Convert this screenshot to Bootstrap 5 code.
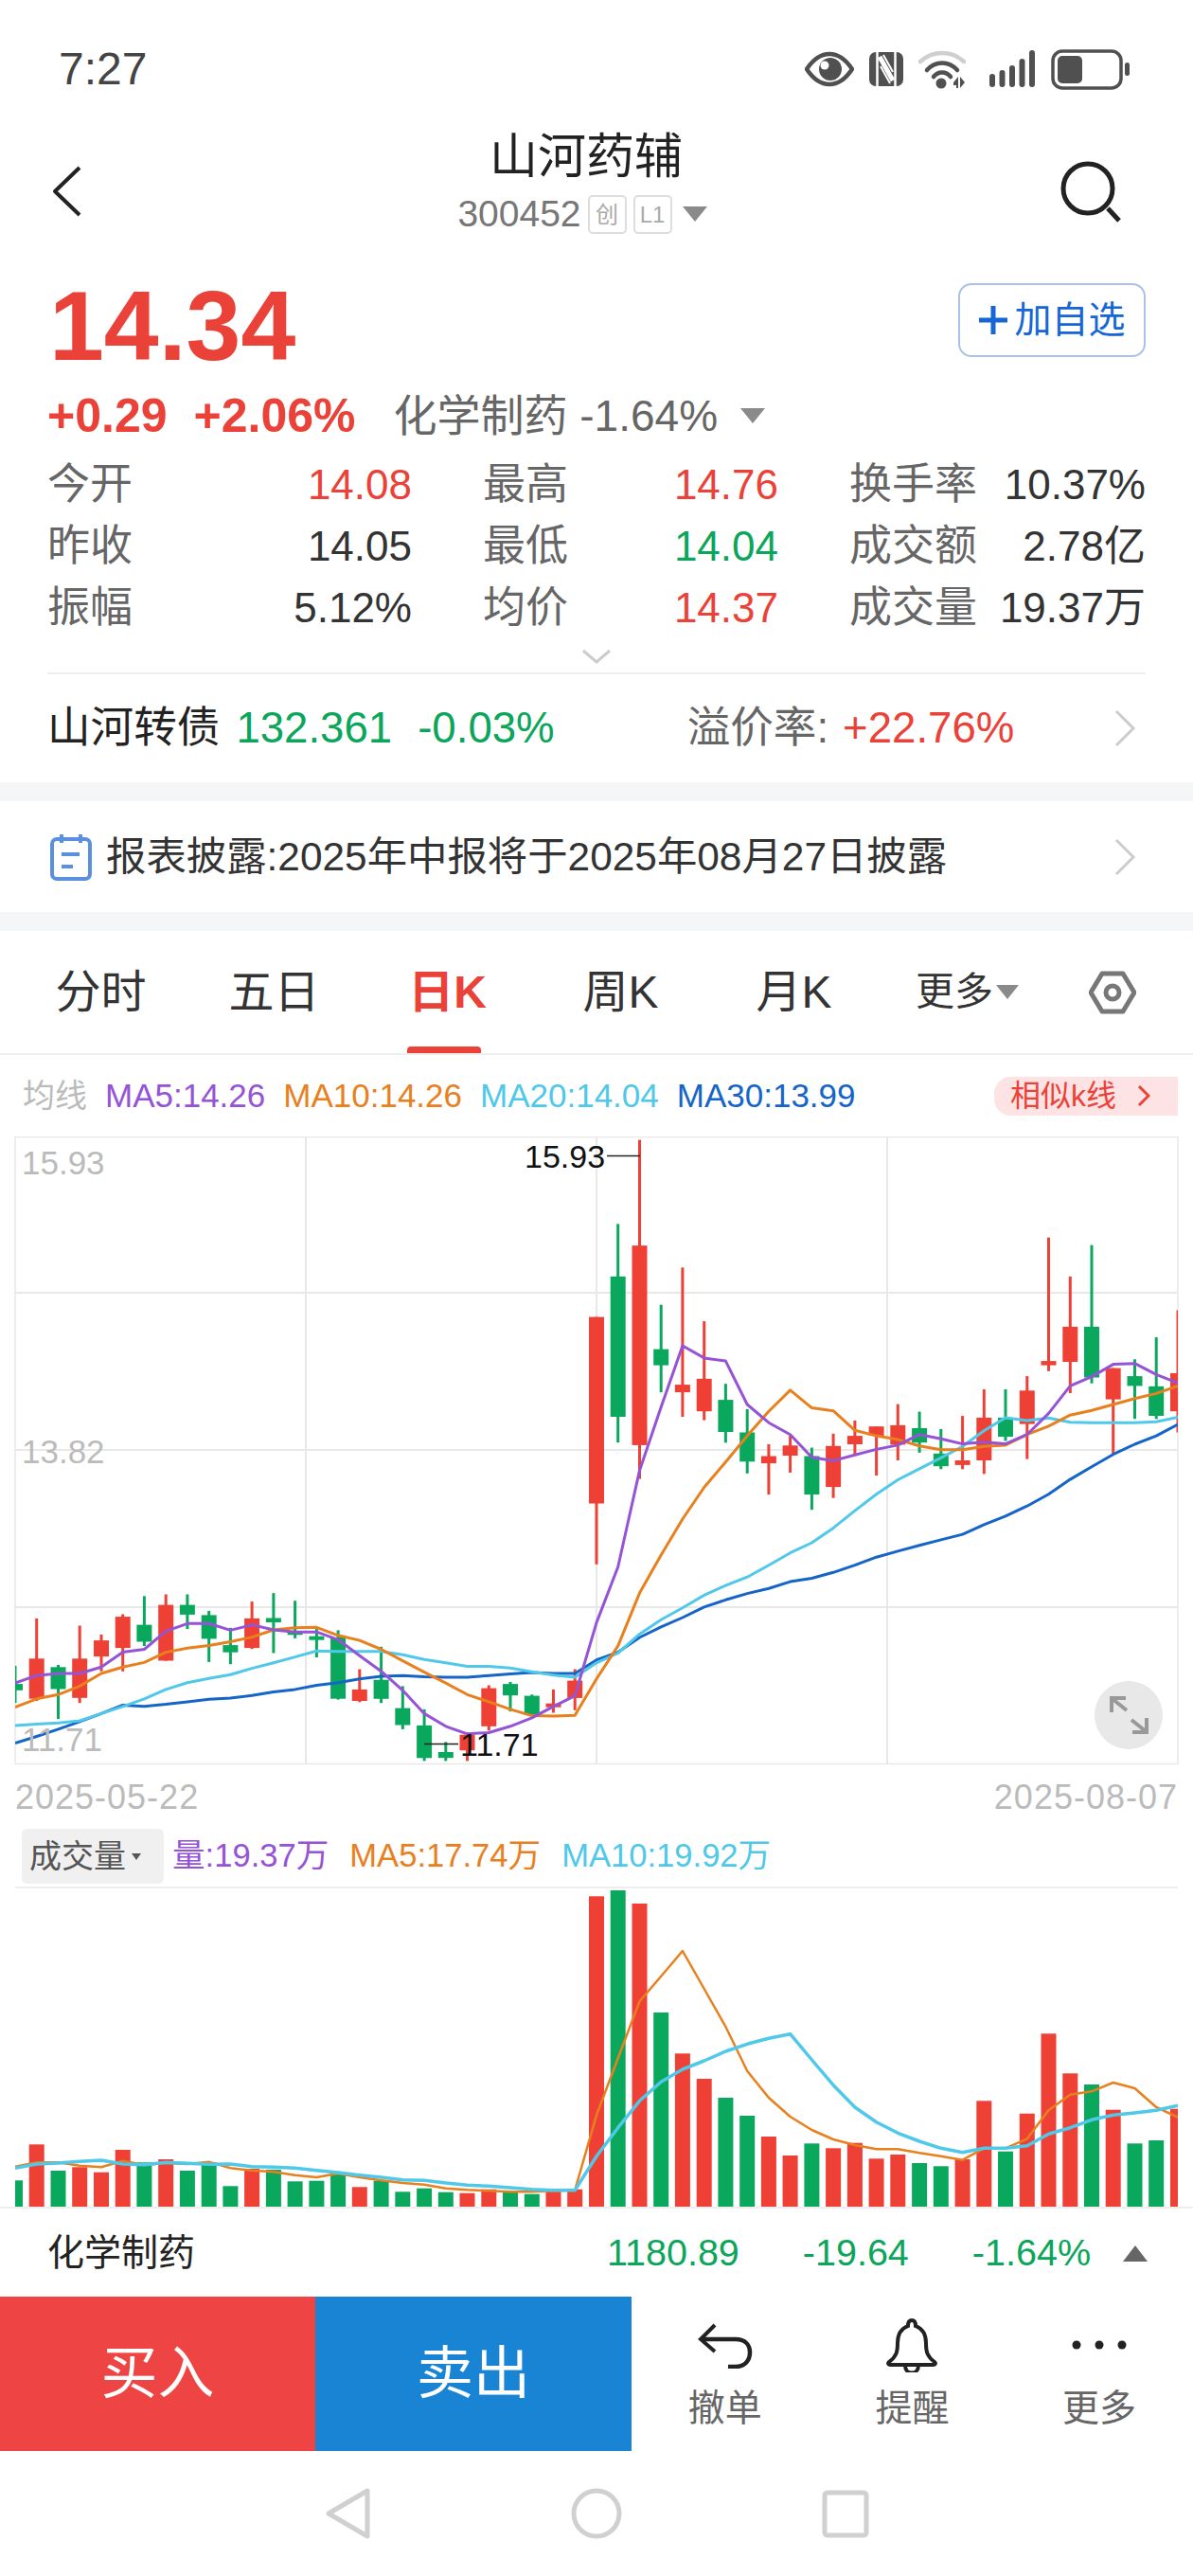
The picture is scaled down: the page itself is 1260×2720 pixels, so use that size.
<!DOCTYPE html>
<html lang="zh-CN">

<head>
    <meta charset="UTF-8">
    <title>山河药辅</title>
    <link href="https://cdn.jsdelivr.net/npm/bootstrap@5.3.0/dist/css/bootstrap.min.css" rel="stylesheet">
    <style>
        body { width: 1260px; background: #fff; font-family: "Liberation Sans", "Noto Sans CJK SC", sans-serif; color: #333; overflow-x: hidden; }
        svg { display: block; flex: none; }
        .c-red { color: #ea4238; }
        .c-green { color: #0ba55c; }
        .c-gray { color: #666; }
        .status-bar { height: 112px; padding: 34px 66px 0 62px; }
        .status-time { font-size: 48px; line-height: 78px; color: #444; }
        .status-icons { gap: 16px; height: 78px; }
        .stock-head { height: 150px; }
        .head-left { width: 190px; padding: 63px 0 0 55px; }
        .head-right { width: 212px; padding: 58px 0 0 72px; }
        .stock-name { font-size: 51px; line-height: 52px; color: #222; margin-top: 28px; }
        .stock-code { font-size: 39px; line-height: 52px; color: #777; margin-top: 8px; margin-right: 8px; gap: 7px; }
        .tag-box { width: 41px; height: 41px; border: 2px solid #ddd; border-radius: 5px; font-size: 24px; line-height: 37px; color: #aaa; text-align: center; }
        .tri-down { display: inline-block; width: 0; height: 0; border-left: 13px solid transparent; border-right: 13px solid transparent; border-top: 16px solid #8a8a8a; }
        .tri-up { display: inline-block; width: 0; height: 0; border-left: 13px solid transparent; border-right: 13px solid transparent; border-bottom: 17px solid #666; }
        .price-row { height: 78px; margin-top: 37px; padding: 0 50px; }
        .price-now { font-size: 104px; line-height: 78px; font-weight: 700; padding: 6px 0 0 2px; }
        .add-btn { width: 198px; height: 78px; border: 2px solid #a9c3e6; border-radius: 14px; color: #1766d6; font-size: 39px; gap: 6px; }
        .change-row { height: 48px; margin-top: 38px; padding: 0 50px; font-size: 46px; line-height: 48px; }
        .change-val { font-size: 50px; font-weight: 700; margin-right: 28px; }
        .change-sector { margin-left: 12px; }
        .stat-wrap { margin-top: 16px; padding: 0 50px; font-size: 44px; }
        .stat-row { height: 65px; line-height: 65px; }
        .stat-row .c-gray { font-size: 45px; }
        .stat-cell { width: 385px; }
        .stat-cell + .stat-cell { width: 312px; margin-left: 75px; }
        .stat-cell:last-child { width: 313px; }
        .more-row { height: 36px; padding-top: 11px; }
        .line-box { margin: 0 50px; height: 2px; background: #eee; }
        .bond-row { height: 114px; padding: 0 60px 0 50px; font-size: 45.6px; }
        .gray-band { height: 20px; background: #f5f6f8; }
        .notice-row { height: 117px; padding: 0 60px 0 53px; font-size: 42.4px; color: #333; gap: 15px; }
        .tabs-row { height: 131px; border-bottom: 2px solid #eee; padding-left: 15px; }
        .tab-item { position: relative; width: 183px; height: 129px; font-size: 48px; color: #333; }
        .tab-on { color: #ea4238; font-weight: 700; }
        .tab-on::after { content: ""; position: absolute; left: 49px; bottom: 0; width: 78px; height: 7px; background: #ea4238; border-radius: 4px 4px 0 0; }
        .tab-more { font-size: 41px; gap: 3px; }
        .tab-more .tri-down { border-left-width: 12px; border-right-width: 12px; border-top-width: 15px; }
        .ma-row { height: 86px; padding-left: 24px; font-size: 35px; gap: 19px; }
        .ma-label { color: #bbb; font-size: 34px; }
        .ma-purple { color: #9553d6; }
        .ma-orange { color: #e8801e; }
        .ma-cyan { color: #4fc8ea; }
        .ma-blue { color: #1565c8; }
        .sim-tag { margin-left: auto; margin-right: 16px; width: 194px; height: 41px; background: #fde3e3; border-radius: 18px 0 0 18px; color: #ea4238; font-size: 32px; gap: 22px; padding-left: 17px; }
        .date-row { height: 67px; padding: 0 16px; font-size: 36px; letter-spacing: 1px; color: #bbb; }
        .vol-head { height: 58px; padding-left: 23px; font-size: 34.6px; gap: 9px; }
        .vol-btn { width: 150px; height: 58px; background: #f0f0f0; border-radius: 6px; color: #555; padding-left: 8px; gap: 6px; font-size: 34px; }
        .vol-btn i { border-left: 5px solid transparent; border-right: 5px solid transparent; border-top: 7px solid #555; }
        .vol-item { margin-left: 13px; }
        .index-row { height: 92px; padding: 0 48px 0 50px; font-size: 39px; color: #222; }
        .index-nums { gap: 67px; font-size: 39.5px; }
        .index-nums .tri-up { margin-left: -33px; }
        .action-bar { height: 163px; }
        .trade-btn { width: 333px; height: 163px; font-size: 60px; color: #fff; }
        .trade-buy { background: #ef4444; }
        .trade-sell { width: 334px; background: #1a84d4; }
        .action-item { width: 197.6px; color: #666; font-size: 39px; line-height: 44px; padding-top: 28px; }
        .action-item svg { margin-bottom: 20px; }
        .action-bell { padding-top: 23px; }
        .action-bell svg { margin-bottom: 16px; }
        .nav-bar { height: 132px; }
    </style>
</head>

<body class="m-0">
    <!-- status bar -->
    <div class="status-bar d-flex justify-content-between align-items-start">
        <div class="status-time">7:27</div>
        <div class="status-icons d-flex align-items-center">
            <svg width="52" height="38" viewBox="0 0 52 38"><path d="M2 19C10 7 18 3 26 3s16 4 24 16c-8 12-16 16-24 16S10 31 2 19Z" fill="none" stroke="#505050" stroke-width="4.5" stroke-linejoin="round"/><circle cx="27" cy="19" r="12" fill="#505050"/><circle cx="21" cy="15" r="4.5" fill="#fff"/></svg>
            <svg width="36" height="38" viewBox="0 0 36 38"><rect x="0" y="1" width="36" height="36" rx="7" fill="#505050"/><path d="M8.500 1v36M27.500 1v36" stroke="#fff" stroke-width="2.500"/><path d="M11 6l14 25" stroke="#fff" stroke-width="5"/><path d="M12 16l10 18M15 4l10 18" stroke="#fff" stroke-width="2"/></svg>
            <svg width="50" height="42" viewBox="0 0 50 42"><path d="M2 13C15 1 35 1 48 13" fill="none" stroke="#cfcfcf" stroke-width="4.500" stroke-linecap="round"/><path d="M9 22C18 12 32 12 41 22" fill="none" stroke="#505050" stroke-width="4.500" stroke-linecap="round"/><path d="M16 29C21 23 29 23 34 29" fill="none" stroke="#505050" stroke-width="4.500" stroke-linecap="round"/><circle cx="24" cy="36" r="5.500" fill="#505050"/><path d="M37 35l5-6v12h-2v-3h-3ZM44 29v12l5-6Z" fill="#505050"/></svg>
            <svg class="ms-2" width="50" height="42" viewBox="0 0 50 42"><g stroke="#505050" stroke-width="6" stroke-linecap="round"><path d="M4 29v8M14.500 25v12M25 20v17M35.500 13v24M46 4v33"/></g></svg>
            <svg width="84" height="44" viewBox="0 0 84 44"><rect x="2" y="3" width="72" height="39" rx="10" fill="none" stroke="#505050" stroke-width="3.500"/><rect x="7" y="8" width="26" height="29" rx="5" fill="#505050"/><rect x="78" y="15" width="5" height="14" rx="2.500" fill="#505050"/></svg>
        </div>
    </div>

    <!-- stock title -->
    <div class="stock-head d-flex">
        <div class="head-left">
            <svg width="32" height="54" viewBox="0 0 32 54"><path d="M29 2 3 27l26 25" fill="none" stroke="#222" stroke-width="4" stroke-linejoin="round"/></svg>
        </div>
        <div class="flex-grow-1 d-flex flex-column align-items-center">
            <div class="stock-name">山河药辅</div>
            <div class="stock-code d-flex align-items-center">
                <span>300452</span>
                <span class="tag-box">创</span>
                <span class="tag-box">L1</span>
                <span class="tri-down ms-1"></span>
            </div>
        </div>
        <div class="head-right">
            <svg width="66" height="66" viewBox="0 0 66 66"><circle cx="29" cy="29" r="26" fill="none" stroke="#222" stroke-width="5"/><path d="M50 50l12 13" stroke="#222" stroke-width="5"/></svg>
        </div>
    </div>

    <!-- price -->
    <div class="price-row d-flex justify-content-between">
        <div class="price-now c-red">14.34</div>
        <div class="add-btn d-flex align-items-center justify-content-center">
            <svg width="32" height="32" viewBox="0 0 32 32"><path d="M16 1v30M1 16h30" stroke="#1766d6" stroke-width="5"/></svg>
            <span>加自选</span>
        </div>
    </div>
    <div class="change-row d-flex align-items-center">
        <span class="change-val c-red">+0.29</span>
        <span class="change-val c-red">+2.06%</span>
        <span class="c-gray change-sector">化学制药 -1.64%</span>
        <span class="tri-down ms-4"></span>
    </div>

    <div class="stat-wrap" id="statWrap"></div>

    <div class="more-row d-flex justify-content-center">
        <svg width="32" height="16" viewBox="0 0 32 16"><path d="M2 2l14 12L30 2" fill="none" stroke="#ccc" stroke-width="3"/></svg>
    </div>
    <div class="line-box"></div>

    <!-- convertible bond -->
    <div class="bond-row d-flex align-items-center">
        <span style="color:#222">山河转债</span>
        <span class="c-green" style="margin-left:17px">132.361</span>
        <span class="c-green" style="margin-left:27px">-0.03%</span>
        <span class="c-gray" style="margin-left:140px">溢价率:</span>
        <span class="c-red" style="margin-left:15px">+22.76%</span>
        <svg class="ms-auto" width="24" height="40" viewBox="0 0 24 40"><path d="M3 2l18 18L3 38" fill="none" stroke="#ccc" stroke-width="3"/></svg>
    </div>
    <div class="gray-band"></div>

    <!-- report notice -->
    <div class="notice-row d-flex align-items-center">
        <svg width="44" height="50" viewBox="0 0 44 50"><rect x="2" y="6" width="40" height="42" rx="5" fill="none" stroke="#5b8fe0" stroke-width="4"/><path d="M12 1v9M32 1v9M12 22h19M12 35h12" stroke="#5b8fe0" stroke-width="4"/></svg>
        <span>报表披露:2025年中报将于2025年08月27日披露</span>
        <svg class="ms-auto" width="24" height="40" viewBox="0 0 24 40"><path d="M3 2l18 18L3 38" fill="none" stroke="#ccc" stroke-width="3"/></svg>
    </div>
    <div class="gray-band"></div>

    <!-- period tabs -->
    <div class="tabs-row d-flex">
        <div class="tab-item d-flex align-items-center justify-content-center">分时</div>
        <div class="tab-item d-flex align-items-center justify-content-center">五日</div>
        <div class="tab-item tab-on d-flex align-items-center justify-content-center">日K</div>
        <div class="tab-item d-flex align-items-center justify-content-center">周K</div>
        <div class="tab-item d-flex align-items-center justify-content-center">月K</div>
        <div class="tab-item tab-more d-flex align-items-center justify-content-center"><span>更多</span><span class="tri-down"></span></div>
        <div class="d-flex align-items-center" style="margin-left:37px">
            <svg width="50" height="46" viewBox="0 0 50 46"><path d="M14 3h22l12 20-12 20H14L2 23Z" fill="none" stroke="#777" stroke-width="5" stroke-linejoin="round"/><circle cx="25" cy="23" r="7" fill="none" stroke="#777" stroke-width="5"/></svg>
        </div>
    </div>

    <!-- MA legend -->
    <div class="ma-row d-flex align-items-center">
        <span class="ma-label">均线</span>
        <span class="ma-purple">MA5:14.26</span>
        <span class="ma-orange">MA10:14.26</span>
        <span class="ma-cyan">MA20:14.04</span>
        <span class="ma-blue">MA30:13.99</span>
        <span class="sim-tag d-flex align-items-center">相似k线
            <svg width="14" height="24" viewBox="0 0 14 24"><path d="M2 2l10 10L2 22" fill="none" stroke="#ea4238" stroke-width="3"/></svg>
        </span>
    </div>

    <svg id="klineChart" width="1260" height="664" viewBox="0 0 1260 664"></svg>

    <div class="date-row d-flex justify-content-between align-items-center">
        <span>2025-05-22</span>
        <span>2025-08-07</span>
    </div>

    <!-- volume -->
    <div class="vol-head d-flex align-items-center">
        <div class="vol-btn d-flex align-items-center"><span>成交量</span><i></i></div>
        <span class="ma-purple">量:19.37万</span>
        <span class="ma-orange vol-item">MA5:17.74万</span>
        <span class="ma-cyan vol-item">MA10:19.92万</span>
    </div>
    <svg id="volChart" width="1260" height="344" viewBox="0 0 1260 344"></svg>

    <!-- sector index -->
    <div class="index-row d-flex justify-content-between align-items-center">
        <span>化学制药</span>
        <div class="index-nums d-flex align-items-center c-green">
            <span>1180.89</span>
            <span>-19.64</span>
            <span>-1.64%</span>
            <span class="tri-up"></span>
        </div>
    </div>

    <!-- actions -->
    <div class="action-bar d-flex">
        <div class="trade-btn trade-buy d-flex align-items-center justify-content-center">买入</div>
        <div class="trade-btn trade-sell d-flex align-items-center justify-content-center">卖出</div>
        <div class="action-item d-flex flex-column align-items-center">
            <svg width="58" height="48" viewBox="0 0 58 48"><path d="M18 2 3 17l15 13" fill="none" stroke="#222" stroke-width="4"/><path d="M4 17h36c10 0 15 6 15 14s-5 15-15 15h-8" fill="none" stroke="#222" stroke-width="4.500"/></svg>
            <span>撤单</span>
        </div>
        <div class="action-item action-bell d-flex flex-column align-items-center">
            <svg width="56" height="57" viewBox="0 0 56 57"><path d="M28 2c-3 0-4 3-4 6-8 3-11 10-11 18 0 9-1 14-9 20-2 2 0 3 2 3h44c2 0 4-1 2-3-8-6-9-11-9-20 0-8-3-15-11-18 0-3-1-6-4-6Z" fill="none" stroke="#222" stroke-width="4"/><path d="M21 50c0 10 14 10 14 0" fill="none" stroke="#222" stroke-width="4"/></svg>
            <span>提醒</span>
        </div>
        <div class="action-item d-flex flex-column align-items-center">
            <svg width="60" height="48" viewBox="0 0 60 48"><circle cx="6" cy="23" r="4.500" fill="#222"/><circle cx="30" cy="23" r="4.500" fill="#222"/><circle cx="54" cy="23" r="4.500" fill="#222"/></svg>
            <span>更多</span>
        </div>
    </div>

    <!-- navigation bar -->
    <div class="nav-bar d-flex">
        <svg width="1260" height="132" viewBox="0 0 1260 132"><g fill="none" stroke="#d0d0d0" stroke-width="5" stroke-linejoin="round"><path d="M388 42v48L347 66Z"/><circle cx="630" cy="66" r="24"/><rect x="871" y="44" width="44" height="45" rx="3"/></g></svg>
    </div>

    <script>
        const RED = '#ee4035';
        const GREEN = '#0aa85c';

        // label, value, value colour class per cell
        const stats = [
            [['今开', '14.08', 'c-red'], ['最高', '14.76', 'c-red'], ['换手率', '10.37%', '']],
            [['昨收', '14.05', ''], ['最低', '14.04', 'c-green'], ['成交额', '2.78亿', '']],
            [['振幅', '5.12%', ''], ['均价', '14.37', 'c-red'], ['成交量', '19.37万', '']]
        ];
        document.getElementById('statWrap').innerHTML = stats.map(row => `
            <div class="stat-row d-flex">${row.map(cell => `
                <div class="stat-cell d-flex justify-content-between">
                    <span class="c-gray">${cell[0]}</span><span class="${cell[2]}">${cell[1]}</span>
                </div>`).join('')}
            </div>`).join('');

        // candles: colour, wick top, wick bottom, body top, body bottom (measured, 2.24 units per px)
        const candles = [
            ['g',1252,1340,1295,1310],['r',1140,1335,1235,1330],['g',1250,1378,1255,1307],['r',1157,1340,1235,1328],
            ['r',1178,1265,1192,1230],['r',1130,1265,1136,1210],['g',1087,1205,1155,1195],['r',1083,1240,1108,1240],
            ['g',1083,1165,1108,1131],['g',1122,1243,1132,1188],['g',1162,1248,1203,1220],['r',1100,1212,1140,1210],
            ['g',1080,1222,1139,1149],['g',1098,1187,1170,1175],['g',1165,1232,1182,1187],['g',1168,1332,1185,1330],
            ['r',1260,1338,1308,1335],['g',1207,1340,1285,1330],['g',1300,1402,1352,1392],['g',1355,1477,1393,1470],
            ['g',1432,1477,1456,1470],['r',1410,1477,1415,1452],['r',1298,1405,1305,1395],['g',1290,1360,1295,1322],
            ['g',1320,1370,1323,1368],['r',1308,1363,1341,1350],['r',1260,1357,1287,1328],['r',427,1012,427,868],
            ['g',207,724,331,663],['r',8,810,258,730],['g',398,605,503,541],['r',310,663,587,605],
            ['r',437,671,573,650],['g',585,724,623,699],['g',645,797,700,769],['r',728,847,756,773],
            ['r',708,795,731,755],['g',736,883,756,847],['r',703,855,732,829],['r',672,755,708,728],
            ['r',686,802,686,708],['r',633,766,683,729],['g',651,748,690,724],['g',692,787,750,780],
            ['r',661,787,766,777],['r',598,798,665,766],['g',598,720,665,710],['r',567,763,601,680],
            ['r',239,555,531,541],['r',331,607,450,533],['g',257,584,450,570],['r',548,752,548,622],
            ['g',527,668,567,590],['g',475,668,591,661],['r',411,700,560,650]
        ];
        const ma5 = [1293,1275,1270,1270,1255,1220,1213,1170,1152,1152,1168,1155,1167,1172,1172,1190,1228,1265,1310,1365,1395,1413,1410,1395,1375,1348,1323,1150,1018,790,640,495,524,531,634,677,705,759,767,753,740,730,705,715,727,723,727,705,655,590,568,539,537,563,583];
        const ma10 = [1350,1330,1320,1300,1270,1255,1244,1220,1210,1204,1195,1184,1167,1162,1161,1180,1192,1213,1240,1267,1293,1320,1337,1355,1370,1371,1369,1283,1205,1080,990,905,830,770,708,650,600,642,649,695,708,717,732,741,741,733,730,705,685,659,648,634,620,608,590];
        const ma20 = [1393,1390,1387,1382,1365,1348,1330,1308,1292,1282,1273,1258,1245,1231,1217,1218,1218,1218,1226,1237,1245,1253,1253,1257,1266,1274,1279,1245,1222,1177,1143,1115,1085,1062,1042,1014,985,961,926,885,846,812,786,760,733,696,665,672,666,676,677,677,677,675,664];
        const ma30 = [1435,1419,1402,1384,1365,1345,1348,1343,1337,1331,1328,1322,1314,1308,1298,1292,1283,1277,1275,1278,1279,1279,1275,1271,1268,1270,1270,1238,1220,1185,1160,1138,1113,1096,1081,1069,1053,1045,1031,1014,995,981,967,954,941,918,898,874,846,811,781,752,728,708,681];

        // volume bars: colour and top (measured, 3 units per px from y=1900)
        const volBars = [
            ['g',1207],['r',1093],['g',1176],['r',1165],['r',1181],['r',1110],['g',1150],['r',1140],['g',1176],['g',1150],
            ['g',1225],['r',1170],['g',1173],['g',1210],['g',1208],['g',1185],['r',1228],['g',1208],['g',1243],['g',1232],
            ['g',1244],['r',1247],['r',1235],['g',1245],['g',1250],['r',1240],['r',1235],['r',307],['g',288],['r',330],
            ['g',675],['r',805],['r',885],['g',945],['g',1002],['r',1068],['r',1128],['g',1090],['r',1105],['r',1088],
            ['r',1138],['r',1125],['g',1152],['g',1162],['r',1140],['r',955],['g',1115],['r',995],['r',742],['r',868],
            ['g',903],['r',983],['g',1090],['g',1080],['r',980]
        ];
        const volMa5 = [1163,1150,1150,1160,1165,1145,1158,1152,1155,1148,1168,1175,1180,1190,1197,1185,1197,1207,1215,1220,1232,1237,1240,1243,1243,1240,1238,1000,820,640,560,480,600,720,860,945,1005,1047,1077,1095,1108,1108,1120,1130,1142,1105,1105,1075,985,935,925,897,915,975,1007];
        const volMa10 = [1168,1155,1152,1147,1143,1155,1157,1150,1153,1156,1155,1163,1165,1168,1175,1182,1190,1197,1205,1207,1215,1222,1225,1230,1235,1238,1238,1130,1040,955,895,855,828,798,775,757,743,825,905,975,1022,1057,1083,1105,1118,1105,1105,1097,1060,1040,1015,1000,993,985,970];

        const xAt = i => 16 + i * 22.74;

        function polyline(values, toY, color, width) {
            const pts = values.map((v, i) => `${xAt(i).toFixed(1)},${toY(v).toFixed(1)}`).join(' ');
            return `<polyline points="${pts}" fill="none" stroke="${color}" stroke-width="${width}" stroke-linejoin="round"/>`;
        }

        // kline chart
        const kY = v => v / 2.24;
        let k = '<defs><clipPath id="kClip"><rect x="16" y="0" width="1228" height="662"/></clipPath></defs>';
        k += '<g stroke="#e8e8e8" stroke-width="2" fill="none"><rect x="16" y="0.5" width="1228" height="662" stroke-width="1.5"/>';
        [165, 331, 497].forEach(y => k += `<path d="M16 ${y}H1244"/>`);
        [323, 630, 937].forEach(x => k += `<path d="M${x} 0V662"/>`);
        k += '</g><g clip-path="url(#kClip)">';
        candles.forEach((c, i) => {
            const x = xAt(i);
            const color = c[0] === 'r' ? RED : GREEN;
            k += `<rect x="${(x - 1.5).toFixed(1)}" y="${kY(c[1]).toFixed(1)}" width="3" height="${kY(c[2] - c[1]).toFixed(1)}" fill="${color}"/>`;
            k += `<rect x="${(x - 8).toFixed(1)}" y="${kY(c[3]).toFixed(1)}" width="16" height="${Math.max(kY(c[4] - c[3]), 4).toFixed(1)}" fill="${color}"/>`;
        });
        k += polyline(ma30, kY, '#1565c8', 3);
        k += polyline(ma20, kY, '#4fc8ea', 3);
        k += polyline(ma10, kY, '#e8801e', 3);
        k += polyline(ma5, kY, '#9553d6', 3);
        k += '</g>';
        k += '<g font-family="Liberation Sans, sans-serif" font-size="35" fill="#bbb"><text x="23" y="40">15.93</text><text x="23" y="345">13.82</text><text x="23" y="649">11.71</text></g>';
        k += '<g font-family="Liberation Sans, sans-serif" font-size="34" fill="#111"><text x="554" y="33">15.93</text><text x="486" y="654">11.71</text></g>';
        k += '<path d="M641 20.500H676M448 641.500H484" stroke="#222" stroke-width="1.500"/>';
        k += '<circle cx="1192" cy="611" r="36" fill="#e8e8e8"/><g fill="none" stroke="#999" stroke-width="4"><path d="M1174 608V593H1189M1175 594 1190 606M1211 614V629H1196M1210 628 1195 616"/></g>';
        document.getElementById('klineChart').innerHTML = k;

        // volume chart
        const vBottom = 341;
        const volY = p => (p / 3) + 1900 - 1989;
        let v = '<defs><clipPath id="vClip"><rect x="16" y="0" width="1228" height="344"/></clipPath></defs>';
        v += '<rect x="16" y="3" width="1228" height="2" fill="#eee"/><rect x="0" y="341" width="1260" height="2" fill="#eee"/><g clip-path="url(#vClip)">';
        volBars.forEach((b, i) => {
            const top = volY(b[1]);
            v += `<rect x="${(xAt(i) - 8).toFixed(1)}" y="${top.toFixed(1)}" width="16" height="${(vBottom - top).toFixed(1)}" fill="${b[0] === 'r' ? RED : GREEN}"/>`;
        });
        v += polyline(volMa5, volY, '#e8801e', 2.5);
        v += polyline(volMa10, volY, '#4fc8ea', 3.5);
        v += '</g>';
        document.getElementById('volChart').innerHTML = v;
    </script>
    <script src="https://cdn.jsdelivr.net/npm/bootstrap@5.3.0/dist/js/bootstrap.bundle.min.js"></script>
</body>

</html>
